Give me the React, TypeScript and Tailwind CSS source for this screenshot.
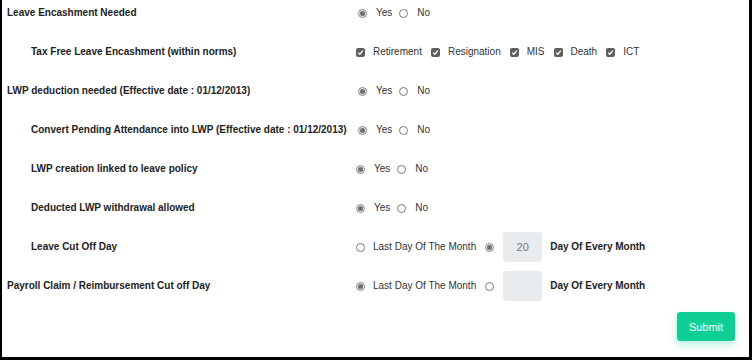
import React from "react";

const Radio = ({ checked }: { checked?: boolean }) => (
  <span
    className={`inline-flex h-[9px] w-[9px] shrink-0 items-center justify-center rounded-full border ${
      checked ? "border-[#8c8c8c] bg-[#e6e6e6]" : "border-[#7a7a7a] bg-white"
    }`}
  >
    {checked && <span className="h-[5px] w-[5px] rounded-full bg-[#6f6f6f]" />}
  </span>
);

const Check = () => (
  <span className="inline-flex h-[9px] w-[9px] shrink-0 items-center justify-center rounded-[2px] bg-[#5f5f5f]">
    <svg width="7" height="7" viewBox="0 0 8 8">
      <path d="M1.3 4.2 L3.2 6 L6.7 1.8" fill="none" stroke="#fff" strokeWidth="1.4" />
    </svg>
  </span>
);

const YesNo = ({ shift }: { shift?: boolean }) => (
  <div className={`flex items-center text-[#333] ${shift ? "ml-[2px]" : ""}`}>
    <Radio checked />
    <span className="ml-[9px] mr-[7px]">Yes</span>
    <Radio />
    <span className="ml-[9px]">No</span>
  </div>
);

const Row = ({
  label,
  indent,
  children,
}: {
  label: string;
  indent?: boolean;
  children: React.ReactNode;
}) => (
  <div className="flex h-[26px] items-center">
    <div
      className={`w-[354px] shrink-0 font-bold text-[#222] ${indent ? "pl-[29px]" : "pl-[5px]"}`}
    >
      {label}
    </div>
    {children}
  </div>
);

const CutOff = ({ lastChecked, value }: { lastChecked: boolean; value: string }) => (
  <div className="flex items-center text-[#333]">
    <Radio checked={lastChecked} />
    <span className="ml-[8px] mr-[9px]">Last Day Of The Month</span>
    <Radio checked={!lastChecked} />
    <div className="ml-[9px] flex h-[30px] w-[39px] items-center justify-center rounded-[3px] bg-[#e9ecef] text-[11px] text-[#777]">
      {value}
    </div>
    <span className="ml-[8px] font-bold text-[#222]">Day Of Every Month</span>
  </div>
);

export default function App() {
  const items = ["Retirement", "Resignation", "MIS", "Death", "ICT"];
  return (
    <div
      className="h-[360px] w-[752px] overflow-hidden border-b-[3px] border-l-[2px] border-r-[3px] border-black bg-white text-[10px] leading-[12px]"
      style={{ fontFamily: '"Liberation Sans", Arial, sans-serif' }}
    >
      <div className="flex flex-col gap-[13px]">
        <Row label="Leave Encashment Needed">
          <YesNo shift />
        </Row>
        <Row label="Tax Free Leave Encashment (within norms)" indent>
          <div className="flex items-center text-[#333]">
            {items.map((it) => (
              <React.Fragment key={it}>
                <Check />
                <span className="ml-[8px] mr-[9px]">{it}</span>
              </React.Fragment>
            ))}
          </div>
        </Row>
        <Row label="LWP deduction needed (Effective date : 01/12/2013)">
          <YesNo shift />
        </Row>
        <Row label="Convert Pending Attendance into LWP (Effective date : 01/12/2013)" indent>
          <YesNo shift />
        </Row>
        <Row label="LWP creation linked to leave policy" indent>
          <YesNo />
        </Row>
        <Row label="Deducted LWP withdrawal allowed" indent>
          <YesNo />
        </Row>
        <Row label="Leave Cut Off Day" indent>
          <CutOff lastChecked={false} value="20" />
        </Row>
        <Row label="Payroll Claim / Reimbursement Cut off Day">
          <CutOff lastChecked value="" />
        </Row>
        <div className="flex justify-end pr-[14px]">
          <button className="h-[29px] w-[58px] rounded-[3px] bg-[#10cf95] text-[11px] text-white shadow-[0_4px_8px_rgba(16,207,149,0.3)]">
            Submit
          </button>
        </div>
      </div>
    </div>
  );
}
